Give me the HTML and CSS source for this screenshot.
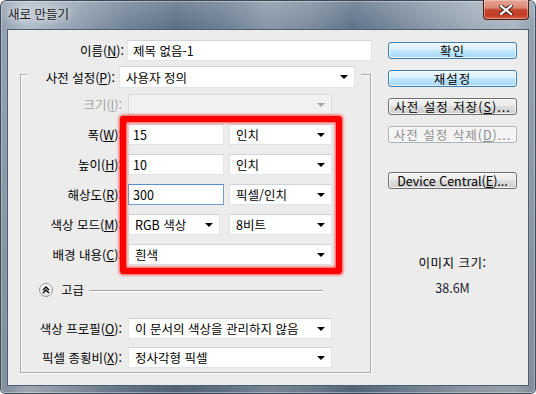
FILE: index.html
```html
<!DOCTYPE html>
<html lang="ko">
<head>
    <meta charset="UTF-8">
    <meta name="viewport" content="width=device-width, initial-scale=1.0">
    <title>새로 만들기</title>
    <link rel="stylesheet" href="styles.css">
</head>
<body>
    <div class="window">
        <div class="titlebar">
            <span class="title">새로 만들기</span>
            <button class="close" aria-label="닫기">
                <svg width="14" height="10" viewBox="0 0 14 10">
                    <path d="M2 1 L12 9 M12 1 L2 9" stroke="#3a1a14" stroke-width="4" stroke-linecap="square"/>
                    <path d="M2 1 L12 9 M12 1 L2 9" stroke="#ffffff" stroke-width="2.2" stroke-linecap="square"/>
                </svg>
            </button>
        </div>

        <div class="client">
            <div class="form">
                <div class="name-row">
                    <label class="name-label">이름(<u>N</u>):</label>
                    <div class="field name-field">제목 없음-1</div>
                </div>

                <div class="group">
                    <div class="legend">
                        <label class="legend-label">사전 설정(<u>P</u>):</label>
                        <div class="field combo preset">사용자 정의</div>
                    </div>

                    <div class="rows">
                        <div class="row">
                            <label class="lbl disabled">크기(<u>I</u>):</label>
                            <div class="field combo full off"></div>
                        </div>
                        <div class="row">
                            <label class="lbl">폭(<u>W</u>):</label>
                            <div class="ctrls">
                                <div class="field num">15</div>
                                <div class="field combo unit">인치</div>
                            </div>
                        </div>
                        <div class="row">
                            <label class="lbl">높이(<u>H</u>):</label>
                            <div class="ctrls">
                                <div class="field num">10</div>
                                <div class="field combo unit">인치</div>
                            </div>
                        </div>
                        <div class="row">
                            <label class="lbl">해상도(<u>R</u>):</label>
                            <div class="ctrls">
                                <div class="field num focus">300</div>
                                <div class="field combo unit">픽셀/인치</div>
                            </div>
                        </div>
                        <div class="row">
                            <label class="lbl">색상 모드(<u>M</u>):</label>
                            <div class="ctrls">
                                <div class="field combo mode">RGB 색상</div>
                                <div class="field combo unit">8비트</div>
                            </div>
                        </div>
                        <div class="row">
                            <label class="lbl">배경 내용(<u>C</u>):</label>
                            <div class="field combo full">흰색</div>
                        </div>
                    </div>

                    <div class="advanced">
                        <span class="toggle">
                            <svg width="8" height="8" viewBox="0 0 8 8">
                                <path d="M1 4 L4 1 L7 4 M1 7 L4 4 L7 7" fill="none" stroke="#000" stroke-width="1.4"/>
                            </svg>
                        </span>
                        <span class="adv-text">고급</span>
                        <span class="adv-line"></span>
                    </div>

                    <div class="row profile">
                        <label class="lbl">색상 프로필(<u>O</u>):</label>
                        <div class="field combo full">이 문서의 색상을 관리하지 않음</div>
                    </div>
                    <div class="row pixel">
                        <label class="lbl">픽셀 종횡비(<u>X</u>):</label>
                        <div class="field combo full">정사각형 픽셀</div>
                    </div>
                </div>
            </div>

            <div class="side">
                <button class="btn blue ko">확인</button>
                <button class="btn blue ko">재설정</button>
                <button class="btn ko">사전 설정 저장(<u>S</u>)...</button>
                <button class="btn ko" disabled>사전 설정 삭제(<u>D</u>)...</button>
                <button class="btn device">Device Central(<u>E</u>)...</button>

                <div class="size-info">
                    <div class="size-label">이미지 크기:</div>
                    <div class="size-value">38.6M</div>
                </div>
            </div>
        </div>

        <!-- annotation drawn over the screenshot -->
        <div class="highlight"></div>
    </div>
</body>
</html>
```

FILE: styles.css
```css
body {
    margin: 0;
    background: #ffffff;
    font-family: "Noto Sans CJK KR", "Malgun Gothic", sans-serif;
    font-size: 12.5px;
    color: #000;
}

.window {
    position: relative;
    width: 536px;
    height: 394px;
    box-sizing: border-box;
    padding: 0 7px 8px 7px;
    border-radius: 6px 6px 5px 5px;
    display: flex;
    flex-direction: column;
    background:
        linear-gradient(to bottom, rgba(255, 255, 255, 0.18) 0, rgba(255, 255, 255, 0) 30px, rgba(0, 0, 0, 0.12) 100%),
        linear-gradient(90deg, #8d9cac 0%, #b3bfcb 5%, #95a4b3 13%, #6f8196 24%, #5d6f84 33%, #6d7f94 42%, #8797a8 50%, #7a8b9d 58%, #5f7288 66%, #7d8ea0 76%, #9eabb8 88%, #aab5c0 96%, #8e9cab 100%);
    box-shadow: inset 0 0 0 1px #3b4959, inset 0 0 0 2px rgba(255, 255, 255, 0.35);
}

.titlebar {
    height: 29px;
    display: flex;
    align-items: flex-start;
}

.title {
    margin: 6px 0 0 1px;
    line-height: 16px;
    color: #1b1b1b;
    text-shadow: 0 0 6px rgba(255, 255, 255, 0.9), 0 0 10px rgba(255, 255, 255, 0.7);
}

.close {
    margin-left: auto;
    width: 46px;
    height: 20px;
    padding: 0;
    border: 1px solid #4b2019;
    border-top: none;
    border-radius: 0 0 4px 4px;
    display: flex;
    align-items: center;
    justify-content: center;
    background: linear-gradient(#e4a594 0%, #d98a76 40%, #c4462f 52%, #c13c25 80%, #d0604a 100%);
    box-shadow: inset 0 0 0 1px rgba(255, 210, 200, 0.45);
}

.client {
    flex: 1;
    display: flex;
    padding: 10px 0 0 12px;
    border: 1px solid #4e5e70;
    background: #ececec;
}

.form {
    width: 352px;
    display: flex;
    flex-direction: column;
}

/* text boxes and combo boxes */
.field {
    box-sizing: border-box;
    height: 100%;
    display: flex;
    align-items: center;
    padding-left: 5px;
    background: #fff;
    border: 1px solid #e1e4e8;
    border-top-color: #cfd4da;
    white-space: nowrap;
}

.field.focus {
    border-color: #6d9fd2;
    border-top-color: #5c8fc4;
}

.combo {
    padding-left: 6px;
}

.combo::after {
    content: "";
    margin-left: auto;
    margin-right: 6px;
    border-left: 4px solid transparent;
    border-right: 4px solid transparent;
    border-top: 4px solid #000;
}

.combo.off {
    background: #f1f1f1;
    border-color: #dadada;
}

.combo.off::after {
    border-top-color: #a8a8a8;
}

.name-row {
    height: 21px;
    display: flex;
    align-items: center;
}

.name-label {
    width: 104px;
    margin-right: 3px;
    text-align: right;
}

.name-field {
    width: 245px;
}

.group {
    margin-top: 13px;
    width: 351px;
    box-sizing: border-box;
    padding-bottom: 4px;
    border: 1px solid #a9a9a9;
    box-shadow: 1px 1px 0 #fff, inset 1px 1px 0 #fff;
    display: flex;
    flex-direction: column;
}

.legend {
    align-self: flex-start;
    height: 22px;
    margin: -9px 0 0 6px;
    padding-right: 6px;
    display: flex;
    align-items: center;
    background: #ececec;
}

.legend-label {
    width: 88px;
    margin-right: 4px;
    text-align: right;
    white-space: nowrap;
}

.preset {
    width: 236px;
}

.rows {
    margin-top: 6px;
    display: flex;
    flex-direction: column;
    gap: 9px;
}

.row {
    height: 21px;
    display: flex;
    align-items: center;
}

.lbl {
    width: 101px;
    margin-right: 6px;
    text-align: right;
    white-space: nowrap;
}

.lbl.disabled {
    color: #a3a3a3;
}

.ctrls {
    width: 204px;
    height: 100%;
    display: flex;
    justify-content: space-between;
}

.num {
    width: 96px;
    padding-left: 4px;
}

.unit {
    width: 103px;
}

.mode {
    width: 92px;
}

.full {
    width: 204px;
}

.advanced {
    height: 14px;
    margin-top: 18px;
    display: flex;
    align-items: center;
}

.toggle {
    width: 14px;
    height: 14px;
    box-sizing: border-box;
    margin-left: 18px;
    border: 1px solid #9a9a9a;
    border-radius: 50%;
    background: linear-gradient(#ffffff, #dedede);
    display: flex;
    align-items: center;
    justify-content: center;
}

.adv-text {
    margin-left: 8px;
    line-height: 14px;
}

.adv-line {
    flex: 1;
    height: 1px;
    margin: 0 47px 0 5px;
    background: #a0a0a0;
    box-shadow: 0 1px 0 #fff;
}

.profile {
    margin-top: 21px;
}

.pixel {
    margin-top: 8px;
}

/* right hand buttons */
.side {
    width: 129px;
    margin: 2px 0 0 16px;
    display: flex;
    flex-direction: column;
    gap: 11px;
}

.btn {
    box-sizing: border-box;
    width: 129px;
    height: 17px;
    padding: 0;
    font-family: inherit;
    font-size: 12.5px;
    line-height: 14px;
    color: #000;
    white-space: nowrap;
    border: 1px solid #707070;
    border-radius: 3px;
    background: linear-gradient(#f2f2f2 0%, #ebebeb 50%, #dddddd 50%, #cfcfcf 100%);
    box-shadow: inset 0 0 0 1px rgba(255, 255, 255, 0.7);
}

.btn.ko {
    letter-spacing: 1px;
}

.btn.blue {
    border-color: #3c7fb1;
    background: linear-gradient(#eaf6fd 0%, #d9f0fc 50%, #bee6fd 50%, #a7d9f5 100%);
}

.btn:disabled {
    color: #8d8d8d;
    border-color: #adb2b5;
    background: #f4f4f4;
}

.btn.device {
    margin-top: 18px;
}

.size-info {
    margin-top: 56px;
    text-align: center;
    line-height: 14px;
}

.size-label {
    letter-spacing: 0.5px;
}

.size-value {
    margin-top: 11px;
    color: #1b1b2e;
}

/* red annotation box */
.highlight {
    position: absolute;
    left: 120px;
    top: 116px;
    width: 222px;
    height: 158px;
    box-sizing: border-box;
    border: 6px solid #ff0000;
    border-radius: 3px;
    box-shadow: 0 0 3px 1px rgba(255, 0, 0, 0.7), inset 0 0 3px 1px rgba(255, 0, 0, 0.7);
}
```
